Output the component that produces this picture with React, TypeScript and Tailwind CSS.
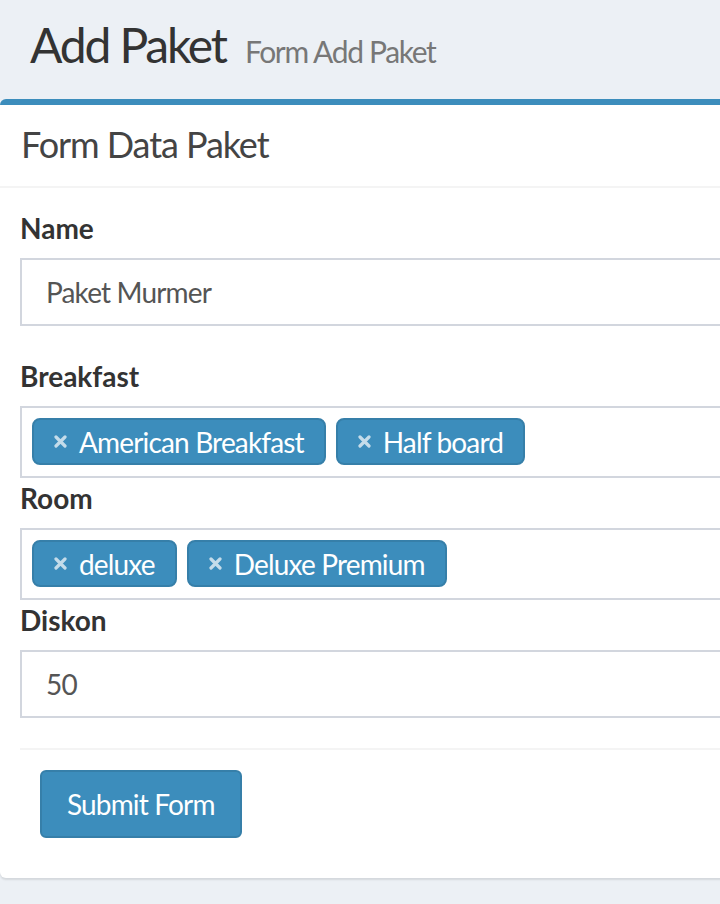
const Tag = ({ label }: { label: string }) => (
  <span className="flex items-center h-[47px] pl-[20px] pr-[20px] rounded-[8px] bg-[#3c8dbc] border-2 border-[#367fa9] text-white text-[28px] tracking-[-0.03em]">
    <svg width="13" height="13" viewBox="0 0 13 13" className="mr-[12px]">
      <path d="M2 2 L11 11 M11 2 L2 11" stroke="#c4dcea" strokeWidth="3.2" strokeLinecap="round" />
    </svg>
    {label}
  </span>
);

const Label = ({ children }: { children: string }) => (
  <label className="block font-bold text-[28px] leading-[40px] text-[#333] mb-[10px]">{children}</label>
);

const Input = ({ value }: { value: string }) => (
  <div className="h-[68px] border-2 border-[#d2d6de] flex items-center pl-[24px] text-[28px] tracking-[-0.03em] text-[#555] bg-white">
    {value}
  </div>
);

const TagSelect = ({ tags }: { tags: string[] }) => (
  <div className="h-[72px] border-2 border-[#d2d6de] flex gap-[10px] pt-[10px] pl-[10px] bg-white">
    {tags.map((t) => (
      <Tag key={t} label={t} />
    ))}
  </div>
);

export default function App() {
  return (
    <div className="min-h-[904px] bg-[#ecf0f5] font-['Lato',sans-serif] text-[#333]">
      <div className="h-[99px] flex items-baseline pl-[30px] pt-[15px]">
        <h1 className="text-[48px] leading-[60px] text-[#333] tracking-[-0.045em]">Add Paket</h1>
        <span className="text-[30px] text-[#777] ml-[19px] tracking-[-0.045em]">Form Add Paket</span>
      </div>
      <div className="w-[740px] bg-white border-t-[6px] border-[#3c8dbc] rounded-[6px] shadow-[0_2px_2px_rgba(0,0,0,0.1)]">
        <div className="h-[83px] flex items-center pl-[21px] pb-[4px] border-b-2 border-[#f4f4f4]">
          <h3 className="text-[36px] text-[#444] tracking-[-0.03em]">Form Data Paket</h3>
        </div>
        <div className="pt-[20px] pl-[20px]">
          <Label>Name</Label>
          <Input value="Paket Murmer" />
          <div className="h-[30px]" />
          <Label>Breakfast</Label>
          <TagSelect tags={["American Breakfast", "Half board"]} />
          <Label>Room</Label>
          <TagSelect tags={["deluxe", "Deluxe Premium"]} />
          <Label>Diskon</Label>
          <Input value="50" />
          <div className="h-[30px]" />
        </div>
        <div className="ml-[20px] border-t-2 border-[#f4f4f4] pt-[20px] pl-[20px] pb-[40px]">
          <button className="h-[68px] px-[25px] rounded-[6px] bg-[#3c8dbc] border-2 border-[#367fa9] text-white text-[28px] tracking-[-0.03em]">
            Submit Form
          </button>
        </div>
      </div>
    </div>
  );
}
